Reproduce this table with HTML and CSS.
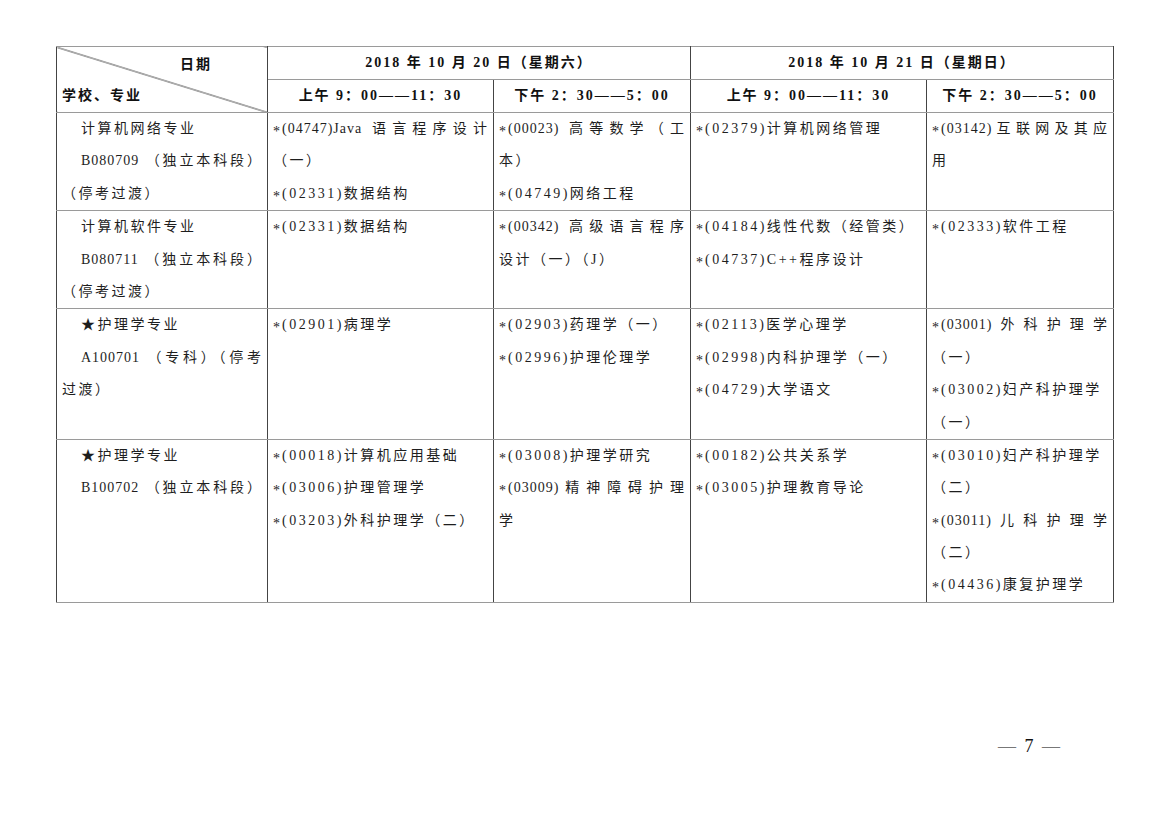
FILE: index.html
```html
<!DOCTYPE html>
<html lang="zh-CN">
<head>
<meta charset="utf-8">
<title>考试课程安排</title>
<link rel="stylesheet" href="styles.css">
</head>
<body>
<div class="page">
  <table class="sched">
    <colgroup>
      <col class="c1"><col class="c2"><col class="c3"><col class="c4"><col class="c5">
    </colgroup>
    <thead>
      <tr class="h1">
        <th rowspan="2" class="diag">
          <div class="d-date">日期</div>
          <div class="d-school">学校、专业</div>
        </th>
        <th colspan="2">2018 年 10 月 20 日（星期六）</th>
        <th colspan="2">2018 年 10 月 21 日（星期日）</th>
      </tr>
      <tr class="h2">
        <th>上午 9：00——11：30</th>
        <th>下午 2：30——5：00</th>
        <th>上午 9：00——11：30</th>
        <th>下午 2：30——5：00</th>
      </tr>
    </thead>
    <tbody>
      <tr>
        <td>
          <span class="ln ind">计算机网络专业</span>
          <span class="ln ind jl">B080709 （独立本科段）</span>
          <span class="ln">（停考过渡）</span>
        </td>
        <td>
          <span class="ln jl"><span class="ast">*</span>(04747)Java 语言程序设计</span>
          <span class="ln">（一）</span>
          <span class="ln"><span class="ast">*</span>(02331)数据结构</span>
        </td>
        <td>
          <span class="ln jl"><span class="ast">*</span>(00023) 高等数学（工</span>
          <span class="ln">本）</span>
          <span class="ln"><span class="ast">*</span>(04749)网络工程</span>
        </td>
        <td>
          <span class="ln"><span class="ast">*</span>(02379)计算机网络管理</span>
        </td>
        <td>
          <span class="ln jl"><span class="ast">*</span>(03142)互联网及其应</span>
          <span class="ln">用</span>
        </td>
      </tr>
      <tr>
        <td>
          <span class="ln ind">计算机软件专业</span>
          <span class="ln ind jl">B080711 （独立本科段）</span>
          <span class="ln">（停考过渡）</span>
        </td>
        <td>
          <span class="ln"><span class="ast">*</span>(02331)数据结构</span>
        </td>
        <td>
          <span class="ln jl"><span class="ast">*</span>(00342) 高级语言程序</span>
          <span class="ln">设计（一）（J）</span>
        </td>
        <td>
          <span class="ln"><span class="ast">*</span>(04184)线性代数（经管类）</span>
          <span class="ln"><span class="ast">*</span>(04737)C++程序设计</span>
        </td>
        <td>
          <span class="ln"><span class="ast">*</span>(02333)软件工程</span>
        </td>
      </tr>
      <tr>
        <td>
          <span class="ln ind">★护理学专业</span>
          <span class="ln ind jl">A100701 （专科）（停考</span>
          <span class="ln">过渡）</span>
        </td>
        <td>
          <span class="ln"><span class="ast">*</span>(02901)病理学</span>
        </td>
        <td>
          <span class="ln"><span class="ast">*</span>(02903)药理学（一）</span>
          <span class="ln"><span class="ast">*</span>(02996)护理伦理学</span>
        </td>
        <td>
          <span class="ln"><span class="ast">*</span>(02113)医学心理学</span>
          <span class="ln"><span class="ast">*</span>(02998)内科护理学（一）</span>
          <span class="ln"><span class="ast">*</span>(04729)大学语文</span>
        </td>
        <td>
          <span class="ln jl"><span class="ast">*</span>(03001)外科护理学</span>
          <span class="ln">（一）</span>
          <span class="ln"><span class="ast">*</span>(03002)妇产科护理学</span>
          <span class="ln">（一）</span>
        </td>
      </tr>
      <tr>
        <td>
          <span class="ln ind">★护理学专业</span>
          <span class="ln ind jl">B100702 （独立本科段）</span>
        </td>
        <td>
          <span class="ln"><span class="ast">*</span>(00018)计算机应用基础</span>
          <span class="ln"><span class="ast">*</span>(03006)护理管理学</span>
          <span class="ln"><span class="ast">*</span>(03203)外科护理学（二）</span>
        </td>
        <td>
          <span class="ln"><span class="ast">*</span>(03008)护理学研究</span>
          <span class="ln jl"><span class="ast">*</span>(03009)精神障碍护理</span>
          <span class="ln">学</span>
        </td>
        <td>
          <span class="ln"><span class="ast">*</span>(00182)公共关系学</span>
          <span class="ln"><span class="ast">*</span>(03005)护理教育导论</span>
        </td>
        <td>
          <span class="ln"><span class="ast">*</span>(03010)妇产科护理学</span>
          <span class="ln">（二）</span>
          <span class="ln jl"><span class="ast">*</span>(03011)儿科护理学</span>
          <span class="ln">（二）</span>
          <span class="ln"><span class="ast">*</span>(04436)康复护理学</span>
        </td>
      </tr>
    </tbody>
  </table>
  <div class="pagenum"><span class="dash">—</span> 7 <span class="dash">—</span></div>
</div>
</body>
</html>
```

FILE: styles.css
```css
html, body {
  margin: 0;
  padding: 0;
  background: #ffffff;
}

body {
  font-family: "Liberation Serif", "Noto Sans CJK SC", serif;
  color: #1e1e1e;
}

.page {
  padding: 46px 0 0 56px;
}

.sched {
  border-collapse: collapse;
  table-layout: fixed;
  width: 1057px;
  border-top: 1px solid #555;
  border-left: 1px solid #999;
  border-right: 1px solid #222;
  border-bottom: 1px solid #999;
}

.c1 { width: 211px; }
.c2 { width: 226px; }
.c3 { width: 197px; }
.c4 { width: 236px; }
.c5 { width: 187px; }

.sched th,
.sched td {
  border-top: 1px solid #9a9a9a;
  border-bottom: 1px solid #9a9a9a;
  border-left: 1px solid #444;
  border-right: 1px solid #444;
  padding: 0 5px;
  vertical-align: top;
  font-size: 14px;
}

.sched th {
  height: 32px;
  line-height: 32px;
  font-weight: bold;
  text-align: center;
  vertical-align: middle;
  letter-spacing: 2px;
  color: #111;
}

.sched td {
  line-height: 32.4px;
  letter-spacing: 2.5px;
  text-align: left;
}

.diag {
  background: linear-gradient(to top right, transparent calc(50% - 0.8px), #333 50%, transparent calc(50% + 0.8px));
}

.sched th.diag {
  padding: 0;
}

.diag .d-date {
  text-align: right;
  padding-right: 55px;
  height: 32px;
  line-height: 34px;
}

.diag .d-school {
  text-align: left;
  padding-left: 5px;
  height: 32px;
  line-height: 32px;
}

.ln {
  display: block;
  height: 32.4px;
  overflow: visible;
  white-space: nowrap;
}

.ind {
  padding-left: 19px;
}

.jl {
  text-align: justify;
  text-align-last: justify;
  white-space: normal;
  letter-spacing: 1px;
}

.ast {
  line-height: 1;
  vertical-align: -3px;
  letter-spacing: 0;
  margin-right: 2px;
}

.pagenum {
  margin-top: 131px;
  width: 1006px;
  text-align: right;
  font-size: 18px;
  line-height: 24px;
  color: #111;
  letter-spacing: 2px;
}

.pagenum .dash {
  color: #777;
}
```
